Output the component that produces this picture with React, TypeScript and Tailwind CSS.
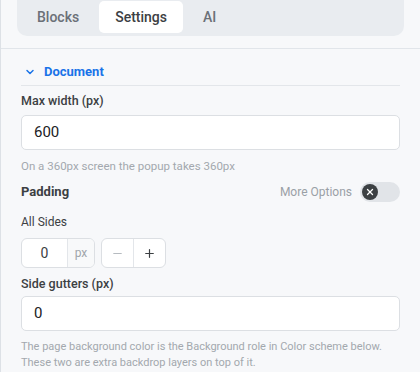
import { ChevronDown, Minus, Plus, X } from "lucide-react";

const font = { fontFamily: "Roboto, 'Liberation Sans', sans-serif" };

function Tabs() {
  const tabs = ["Blocks", "Settings", "AI"];
  return (
    <div className="mx-4 flex gap-1 rounded-b-[10px] bg-[#e9ecf0] pt-px pb-[3px] pl-1">
      {tabs.map((t) => (
        <div
          key={t}
          className={
            t === "Settings"
              ? "flex h-8 items-center rounded-[5px] bg-white px-4 text-sm font-medium text-[#3c4043]"
              : "flex h-8 items-center px-4 text-sm font-medium text-[#6b7078]"
          }
        >
          {t}
        </div>
      ))}
    </div>
  );
}

export default function App() {
  return (
    <div
      className="h-[372px] w-[420px] overflow-hidden border-l border-[#dde1e6] bg-[#f7f8fa]"
      style={font}
    >
      <Tabs />
      <div className="mt-3 border-t border-[#e1e5ea] px-5">
        <div className="mt-[13px] box-content flex h-5 items-center gap-[8px] border-b border-[#e3e6ea] pb-[3px] pl-[3px] text-[13px] font-bold text-[#1a73e8]">
          <ChevronDown size={12} strokeWidth={3} />
          <span>Document</span>
        </div>

        <div className="mt-[5px] text-[12.5px] leading-5 font-medium text-[#3c4043]">
          Max width (px)
        </div>
        <div className="mt-[4px] flex h-[35px] items-center rounded-[5px] border border-[#dcdfe3] bg-white px-3 text-[15px] text-[#202124]">
          600
        </div>
        <div className="mt-[8px] text-[11.5px] leading-4 text-[#a3a8ae]">
          On a 360px screen the popup takes 360px
        </div>

        <div className="mt-[8px] flex h-5 items-center justify-between">
          <span className="text-[13px] font-bold text-[#3c4043]">Padding</span>
          <div className="flex items-center gap-[8px]">
            <span className="text-[12px] text-[#9aa0a6]">More Options</span>
            <div className="flex h-5 w-10 items-center rounded-full bg-[#e1e4e8] pl-[2px]">
              <div className="flex h-4 w-4 items-center justify-center rounded-full bg-[#3c4043] text-white">
                <X size={10} strokeWidth={3} />
              </div>
            </div>
          </div>
        </div>

        <div className="mt-[10px] text-[12px] leading-5 text-[#3c4043]">All Sides</div>
        <div className="mt-[6px] flex gap-[6px]">
          <div className="flex h-[30px] w-[74px] overflow-hidden rounded-[6px] border border-[#dcdfe3] bg-white">
            <div className="flex w-[45px] items-center justify-center text-[14px] text-[#3c4043]">0</div>
            <div className="flex flex-1 items-center justify-center border-l border-[#e3e6ea] bg-[#f8f9fa] text-[12px] text-[#a0a5ab]">
              px
            </div>
          </div>
          <div className="flex h-[30px] w-[65px] overflow-hidden rounded-[6px] border border-[#dcdfe3] bg-white">
            <div className="flex flex-1 items-center justify-center text-[#b6bbc0]">
              <Minus size={13} strokeWidth={2} />
            </div>
            <div className="flex flex-1 items-center justify-center border-l border-[#e3e6ea] text-[#3c4043]">
              <Plus size={13} strokeWidth={2.2} />
            </div>
          </div>
        </div>

        <div className="mt-[6px] text-[12.5px] leading-5 font-medium text-[#3c4043]">
          Side gutters (px)
        </div>
        <div className="mt-[2px] flex h-[35px] items-center rounded-[5px] border border-[#dcdfe3] bg-white px-3 text-[15px] text-[#202124]">
          0
        </div>
        <div className="mt-[8px] text-[11px] leading-4 text-[#a3a8ae]">
          The page background color is the Background role in Color scheme below.
          <br />
          These two are extra backdrop layers on top of it.
        </div>
      </div>
    </div>
  );
}
